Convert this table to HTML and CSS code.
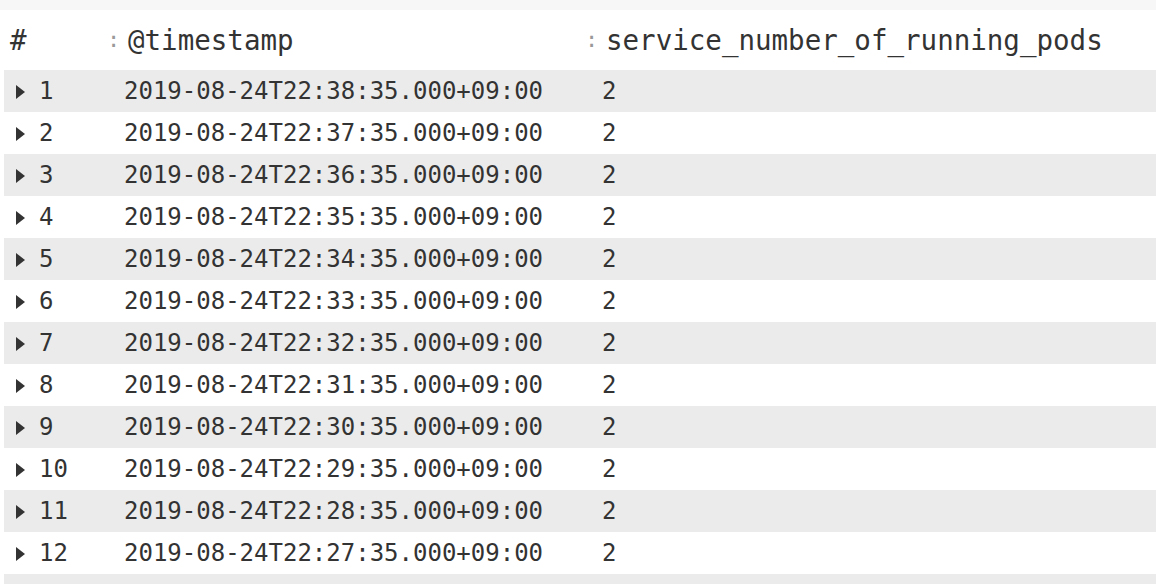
FILE: index.html
```html
<!DOCTYPE html>
<html lang="en">
<head>
    <meta charset="UTF-8">
    <title>Query results</title>
    <link rel="stylesheet" href="styles.css">
</head>
<body>
    <div class="top-strip"></div>
    <table class="results">
        <colgroup>
            <col class="col-index">
            <col class="col-time">
            <col class="col-value">
        </colgroup>
        <thead>
            <tr>
                <th class="idx-head">#</th>
                <th><span class="handle">:</span>@timestamp</th>
                <th><span class="handle">:</span>service_number_of_running_pods</th>
            </tr>
        </thead>
        <tbody id="rows"></tbody>
    </table>

    <script>
        const tbody = document.getElementById('rows');
        for (let i = 1; i <= 13; i++) {
            const minute = 39 - i;
            const tr = document.createElement('tr');
            if (i > 12) tr.classList.add('partial');
            tr.innerHTML =
                '<td class="idx"><span class="caret"></span>' + (i <= 12 ? i : '') + '</td>' +
                '<td>' + (i <= 12 ? '2019-08-24T22:' + minute + ':35.000+09:00' : '') + '</td>' +
                '<td>' + (i <= 12 ? '2' : '') + '</td>';
            tbody.appendChild(tr);
        }
    </script>
</body>
</html>
```

FILE: styles.css
```css
html, body {
    height: 100%;
    overflow: hidden;
}
body {
    margin: 0;
    background-color: #ffffff;
    color: #333333;
    font-family: "DejaVu Sans Mono", "Liberation Mono", monospace;
}
.top-strip {
    height: 10px;
    background-color: #f7f7f7;
}
.results {
    margin-left: 4px;
    width: 1152px;
    border-collapse: collapse;
    table-layout: fixed;
}
.col-index { width: 101px; }
.col-time { width: 478px; }
.results th {
    height: 60px;
    padding: 0 0 0 2px;
    text-align: left;
    font-weight: normal;
    font-size: 27.5px;
    white-space: nowrap;
}
.results th.idx-head { padding-left: 6px; }
.handle {
    display: inline-block;
    width: 21px;
    font-size: 22px;
    color: #999999;
    vertical-align: 3px;
}
.results td {
    height: 42px;
    padding: 0 0 0 19px;
    font-size: 24px;
    white-space: nowrap;
}
.results tbody tr:nth-child(odd) td { background-color: #ebebeb; }
.results tr.partial td { height: 10px; }
.results tr.partial .caret { display: none; }
.results td.idx { padding-left: 12px; }
.caret {
    display: inline-block;
    width: 0;
    height: 0;
    border-top: 7px solid transparent;
    border-bottom: 7px solid transparent;
    border-left: 9px solid #333333;
    margin-right: 14px;
    vertical-align: 0;
}
```
